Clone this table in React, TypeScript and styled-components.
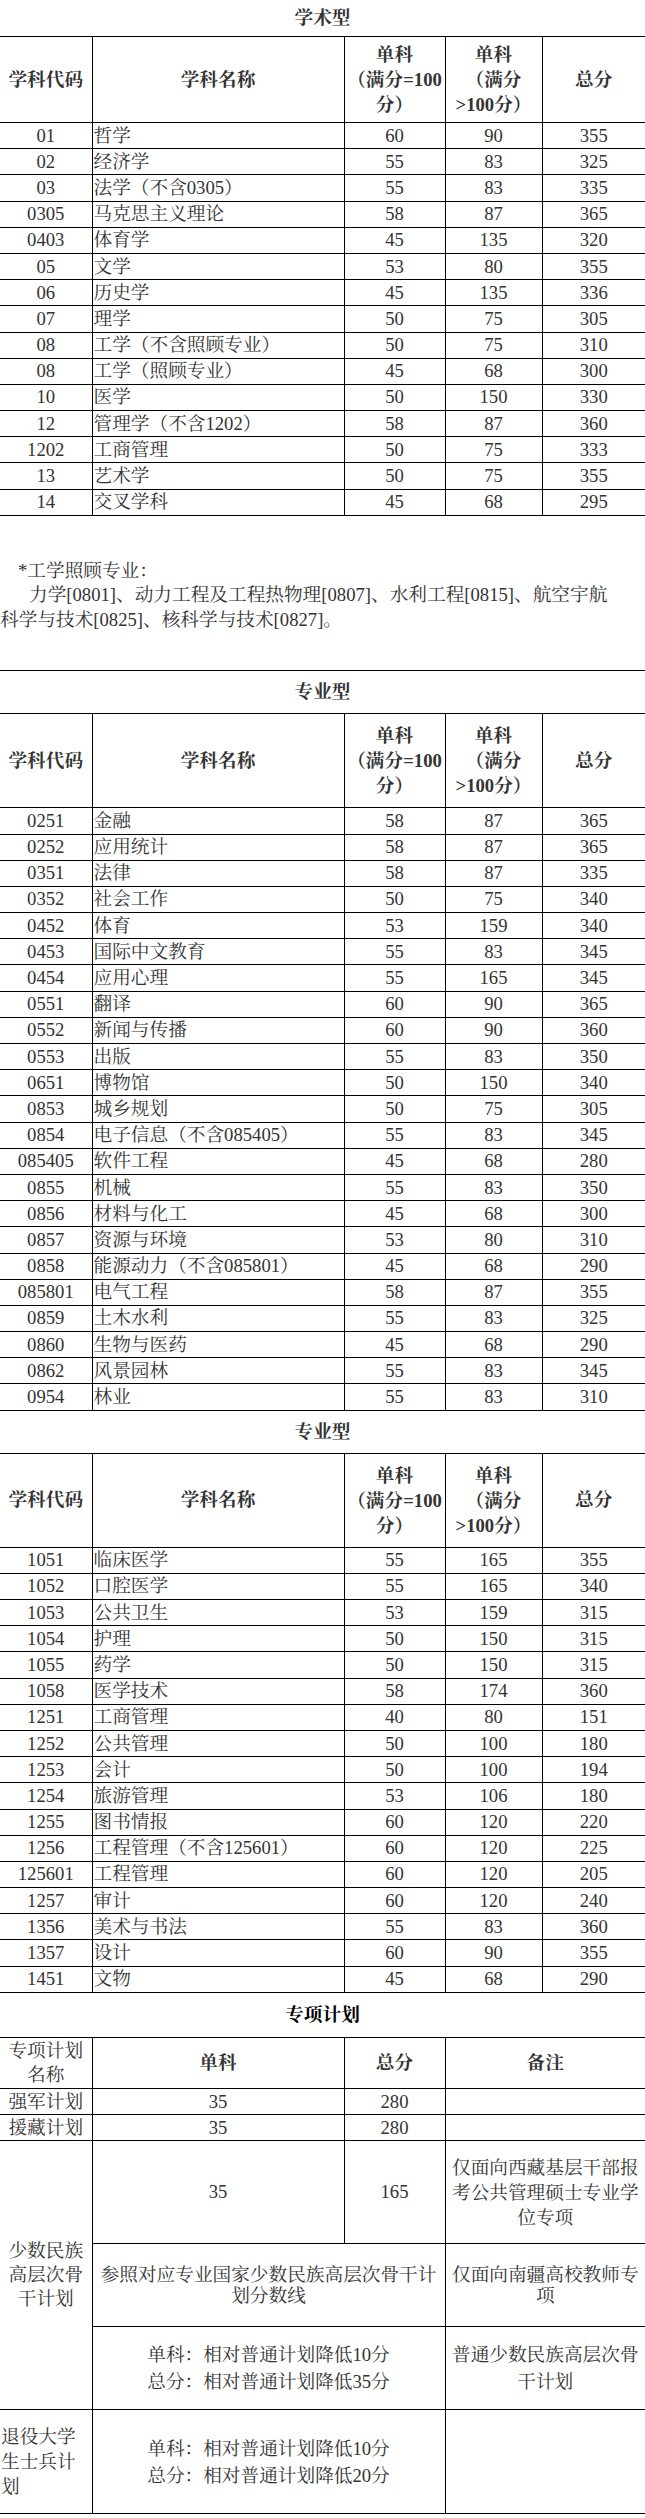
import React from "react";
import styled, { createGlobalStyle } from "styled-components";

const FONT = `"Liberation Serif", "Noto Serif CJK SC", "Noto Sans CJK SC", serif`;

const GlobalStyle = createGlobalStyle`
  html, body { margin: 0; padding: 0; background: #fff; }
  body {
    font-family: ${FONT};
    font-size: 14pt;
    color: #333;
    overflow-x: hidden;
  }
`;

const Page = styled.div`
  width: 645px;
  overflow: hidden;
  padding-bottom: 5px;
`;

const SectionTitle = styled.div`
  height: 36px;
  line-height: 36px;
  text-align: center;
  font-weight: bold;
`;

const Table = styled.table<{ $mt?: number }>`
  width: 645px;
  border-collapse: collapse;
  table-layout: fixed;
  margin-top: ${(p) => p.$mt ?? 0}px;
`;

const Row = styled.tr<{ $h: number }>`
  height: ${(p) => p.$h}px;
`;

const Cell = styled.td<{
  $align?: "left" | "center";
  $bold?: boolean;
  $lh?: number;
  $pad?: string;
}>`
  border: 1px solid #000;
  padding: ${(p) => p.$pad ?? "0"};
  text-align: ${(p) => p.$align ?? "center"};
  vertical-align: middle;
  font-weight: ${(p) => (p.$bold ? "bold" : "normal")};
  line-height: ${(p) => p.$lh ?? 24}px;
  white-space: normal;
  &:first-child { border-left: none; }
  &:last-child { border-right: none; }
`;

const TitleCell = styled.td<{ $dark?: boolean }>`
  border-top: ${(p) => (p.$dark ? "none" : "1px solid #000")};
  border-bottom: 1px solid #000;
  border-left: none;
  border-right: none;
  padding: 0;
  line-height: 24px;
  text-align: center;
  vertical-align: middle;
  font-weight: bold;
  color: ${(p) => (p.$dark ? "#000" : "#333")};
`;

const Note = styled.div`
  margin-top: 43px;
  line-height: 24.5px;
`;

const NoteLine = styled.p<{ $indent: number }>`
  margin: 0;
  text-indent: ${(p) => p.$indent}px;
`;

type ScoreRow = [string, string, string, string, string];

const academic: ScoreRow[] = [
  ["01", "哲学", "60", "90", "355"],
  ["02", "经济学", "55", "83", "325"],
  ["03", "法学（不含0305）", "55", "83", "335"],
  ["0305", "马克思主义理论", "58", "87", "365"],
  ["0403", "体育学", "45", "135", "320"],
  ["05", "文学", "53", "80", "355"],
  ["06", "历史学", "45", "135", "336"],
  ["07", "理学", "50", "75", "305"],
  ["08", "工学（不含照顾专业）", "50", "75", "310"],
  ["08", "工学（照顾专业）", "45", "68", "300"],
  ["10", "医学", "50", "150", "330"],
  ["12", "管理学（不含1202）", "58", "87", "360"],
  ["1202", "工商管理", "50", "75", "333"],
  ["13", "艺术学", "50", "75", "355"],
  ["14", "交叉学科", "45", "68", "295"],
];

const professional1: ScoreRow[] = [
  ["0251", "金融", "58", "87", "365"],
  ["0252", "应用统计", "58", "87", "365"],
  ["0351", "法律", "58", "87", "335"],
  ["0352", "社会工作", "50", "75", "340"],
  ["0452", "体育", "53", "159", "340"],
  ["0453", "国际中文教育", "55", "83", "345"],
  ["0454", "应用心理", "55", "165", "345"],
  ["0551", "翻译", "60", "90", "365"],
  ["0552", "新闻与传播", "60", "90", "360"],
  ["0553", "出版", "55", "83", "350"],
  ["0651", "博物馆", "50", "150", "340"],
  ["0853", "城乡规划", "50", "75", "305"],
  ["0854", "电子信息（不含085405）", "55", "83", "345"],
  ["085405", "软件工程", "45", "68", "280"],
  ["0855", "机械", "55", "83", "350"],
  ["0856", "材料与化工", "45", "68", "300"],
  ["0857", "资源与环境", "53", "80", "310"],
  ["0858", "能源动力（不含085801）", "45", "68", "290"],
  ["085801", "电气工程", "58", "87", "355"],
  ["0859", "土木水利", "55", "83", "325"],
  ["0860", "生物与医药", "45", "68", "290"],
  ["0862", "风景园林", "55", "83", "345"],
  ["0954", "林业", "55", "83", "310"],
];

const professional2: ScoreRow[] = [
  ["1051", "临床医学", "55", "165", "355"],
  ["1052", "口腔医学", "55", "165", "340"],
  ["1053", "公共卫生", "53", "159", "315"],
  ["1054", "护理", "50", "150", "315"],
  ["1055", "药学", "50", "150", "315"],
  ["1058", "医学技术", "58", "174", "360"],
  ["1251", "工商管理", "40", "80", "151"],
  ["1252", "公共管理", "50", "100", "180"],
  ["1253", "会计", "50", "100", "194"],
  ["1254", "旅游管理", "53", "106", "180"],
  ["1255", "图书情报", "60", "120", "220"],
  ["1256", "工程管理（不含125601）", "60", "120", "225"],
  ["125601", "工程管理", "60", "120", "205"],
  ["1257", "审计", "60", "120", "240"],
  ["1356", "美术与书法", "55", "83", "360"],
  ["1357", "设计", "60", "90", "355"],
  ["1451", "文物", "45", "68", "290"],
];

const ROW_H = 26.2;

function ScoreCols() {
  return (
    <colgroup>
      <col style={{ width: 92 }} />
      <col style={{ width: 252 }} />
      <col style={{ width: 101 }} />
      <col style={{ width: 97 }} />
      <col style={{ width: 103 }} />
    </colgroup>
  );
}

function HeaderRow({ h }: { h: number }) {
  return (
    <Row $h={h}>
      <Cell $bold>学科代码</Cell>
      <Cell $bold>学科名称</Cell>
      <Cell $bold $lh={25}>
        单科
        <br />
        （满分=100
        <br />
        分）
      </Cell>
      <Cell $bold $lh={25}>
        单科
        <br />
        （满分
        <br />
        &gt;100分）
      </Cell>
      <Cell $bold>总分</Cell>
    </Row>
  );
}

function DataRows({ rows }: { rows: ScoreRow[] }) {
  return (
    <>
      {rows.map((r, i) => (
        <Row $h={ROW_H} key={i}>
          <Cell>{r[0]}</Cell>
          <Cell $align="left" $pad="0 0 0 1px">
            {r[1]}
          </Cell>
          <Cell>{r[2]}</Cell>
          <Cell>{r[3]}</Cell>
          <Cell>{r[4]}</Cell>
        </Row>
      ))}
    </>
  );
}

export default function App() {
  return (
    <Page>
      <GlobalStyle />
      <SectionTitle>学术型</SectionTitle>
      <Table>
        <ScoreCols />
        <tbody>
          <HeaderRow h={86} />
          <DataRows rows={academic} />
        </tbody>
      </Table>

      <Note>
        <NoteLine $indent={18}>*工学照顾专业：</NoteLine>
        <NoteLine $indent={29}>
          力学[0801]、动力工程及工程热物理[0807]、水利工程[0815]、航空宇航
          <br />
          科学与技术[0825]、核科学与技术[0827]。
        </NoteLine>
      </Note>

      <Table $mt={38}>
        <ScoreCols />
        <tbody>
          <Row $h={43}>
            <TitleCell colSpan={5}>专业型</TitleCell>
          </Row>
          <HeaderRow h={94} />
          <DataRows rows={professional1} />
          <Row $h={43}>
            <TitleCell colSpan={5}>专业型</TitleCell>
          </Row>
          <HeaderRow h={94} />
          <DataRows rows={professional2} />
        </tbody>
      </Table>

      <Table>
        <colgroup>
          <col style={{ width: 92 }} />
          <col style={{ width: 252 }} />
          <col style={{ width: 101 }} />
          <col style={{ width: 200 }} />
        </colgroup>
        <tbody>
          <Row $h={45}>
            <TitleCell colSpan={4} $dark>
              专项计划
            </TitleCell>
          </Row>
          <Row $h={51}>
            <Cell>
              专项计划
              <br />
              名称
            </Cell>
            <Cell $bold>单科</Cell>
            <Cell $bold>总分</Cell>
            <Cell $bold>备注</Cell>
          </Row>
          <Row $h={26}>
            <Cell>强军计划</Cell>
            <Cell>35</Cell>
            <Cell>280</Cell>
            <Cell />
          </Row>
          <Row $h={26}>
            <Cell>援藏计划</Cell>
            <Cell>35</Cell>
            <Cell>280</Cell>
            <Cell />
          </Row>
          <Row $h={103}>
            <Cell rowSpan={3} $lh={24}>
              少数民族高层次骨干计划
            </Cell>
            <Cell>35</Cell>
            <Cell>165</Cell>
            <Cell $lh={25} $pad="0 4px">
              仅面向西藏基层干部报考公共管理硕士专业学位专项
            </Cell>
          </Row>
          <Row $h={83}>
            <Cell colSpan={2} $lh={21} $pad="0 2px">
              参照对应专业国家少数民族高层次骨干计划分数线
            </Cell>
            <Cell $lh={21} $pad="0 4px">
              仅面向南疆高校教师专项
            </Cell>
          </Row>
          <Row $h={83}>
            <Cell colSpan={2} $lh={27}>
              单科：相对普通计划降低10分
              <br />
              总分：相对普通计划降低35分
            </Cell>
            <Cell $lh={27} $pad="0 4px">
              普通少数民族高层次骨干计划
            </Cell>
          </Row>
          <Row $h={104}>
            <Cell $align="left" $lh={25} $pad="0 0 0 1px">
              退役大学生士兵计划
            </Cell>
            <Cell colSpan={2} $lh={27}>
              单科：相对普通计划降低10分
              <br />
              总分：相对普通计划降低20分
            </Cell>
            <Cell />
          </Row>
        </tbody>
      </Table>
    </Page>
  );
}
